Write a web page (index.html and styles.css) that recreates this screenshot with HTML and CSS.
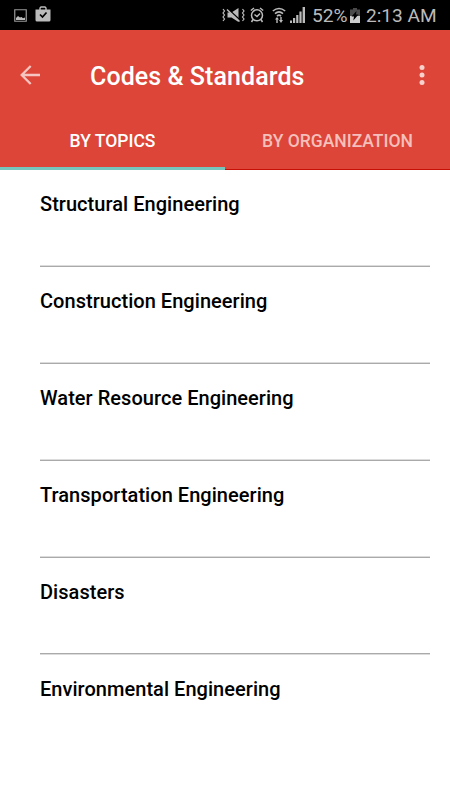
FILE: index.html
```html
<!DOCTYPE html>
<html lang="en">
<head>
<meta charset="utf-8">
<title>Codes &amp; Standards</title>
<link rel="stylesheet" href="styles.css">
</head>
<body>
<div class="status">
  <svg class="picture" width="13" height="13" viewBox="0 0 13 13"><path d="M.75.75h11.5v11.5H.75z" fill="none" stroke="#999" stroke-width="1.2"/><path d="M2 11V9l2-2 2 1.5L7.5 8l1.5 1.2 2-.7V11z" fill="#bbb"/></svg>
  <svg class="bag" width="16" height="16" viewBox="0 0 16 16"><path d="M5 4V2l1-1h4l1 1v2" fill="none" stroke="#bbb" stroke-width="1.4"/><path d="M.5 3.5h15V14q0 1.5-1.5 1.5H2Q.5 15.500.5 14z" fill="#bbb"/><path d="M5 8.500l2.500 2.500L11.500 6.500" fill="none" stroke="#000" stroke-width="1.7"/></svg>
  <svg class="mute" width="23" height="16" viewBox="0 0 23 16" fill="none" stroke="#bbb" stroke-width="1.2"><path d="M5.500 5.500h4L16.500 1v14l-7-4.500h-4z" fill="#bbb" stroke="none"/><path d="M5.500 1.500L18 13" stroke="#000" stroke-width="1.500"/><path d="M5 2.500L17.500 14.500" stroke-width="1.500"/><path d="M1 2l1.500 2L1 6l1.500 2L1 10l1.500 2L1 14M20.500 2L22 4l-1.500 2L22 8l-1.500 2 1.500 2-1.500 2"/></svg>
  <svg class="alarm" width="14" height="16" viewBox="0 0 14 16" fill="none" stroke="#bbb" stroke-width="1.5"><circle cx="7" cy="8.300" r="5.500"/><path d="M.8 3.500L4 1M13.200 3.500L10 1M3 12.500L1.500 15M11 12.500l1.500 2.500M4.500 7.500L7 9.500l3-3"/></svg>
  <svg class="wifi" width="14" height="16" viewBox="0 0 14 16" fill="none" stroke="#bbb" stroke-width="1.600"><path d="M.8 4Q7-1 13.200 4M3 6.700q4-3.500 8 0M5 9.200q2-2 4 0"/><path d="M3 12.500l2-2.500L7 12.500H5.700V16H4.300v-3.500zM7 13h1.300v-3h1.400v3H11l-2 3z" fill="#bbb" stroke="none"/></svg>
  <svg class="signal" width="15" height="16" viewBox="0 0 15 16" fill="#bbb"><path d="M0 13.500h2V16H0zM3 11h2.200v5H3zM6.200 8h2.200v8H6.200zM9.400 4.500h2.200V16H9.400zM12.600 0H15v16h-2.400z"/></svg>
  <span class="percent">52%</span>
  <svg class="battery" width="10" height="15" viewBox="0 0 10 15"><path d="M3 0h4v1.500h3V9H0V1.500h3z" fill="#4a4a4a"/><path d="M0 8h10v7H0z" fill="#ccc"/><path d="M6.500 3L1.500 8.500H4L3.300 12.500l5.200-6H6z" fill="#000"/></svg>
  <span class="clock">2:13 AM</span>
</div>
<header class="header">
  <div class="toolbar">
    <svg class="back" width="20" height="20" viewBox="0 0 20 20" fill="none" stroke="#f6c5c1" stroke-width="2.300"><path d="M20 10H2M10.700 1L1.700 10l9 9"/></svg>
    <h1 class="title">Codes &amp; Standards</h1>
    <svg class="more" width="6" height="20" viewBox="0 0 6 20" fill="#f8d0cc"><circle cx="3" cy="2.500" r="2.500"/><circle cx="3" cy="10" r="2.500"/><circle cx="3" cy="17.500" r="2.500"/></svg>
  </div>
  <nav class="tabs">
    <div class="tab active"><span class="label">BY TOPICS</span></div>
    <div class="tab"><span class="label">BY ORGANIZATION</span></div>
  </nav>
</header>
<ul class="list">
  <li class="row">Structural Engineering</li>
  <li class="row">Construction Engineering</li>
  <li class="row">Water Resource Engineering</li>
  <li class="row">Transportation Engineering</li>
  <li class="row">Disasters</li>
  <li class="row">Environmental Engineering</li>
</ul>
</body>
</html>
```
FILE: styles.css
```css
* { box-sizing: border-box; }
body {
  margin: 0;
  height: 800px;
  overflow: hidden;
  background: #fff;
  font-family: Roboto, sans-serif;
}
svg { display: block; flex: none; }
.status {
  display: flex;
  align-items: center;
  height: 30px;
  padding-left: 14px;
  background: #000;
  color: #bbb;
  font-size: 19.5px;
  line-height: 30px;
  white-space: nowrap;
}
.bag { margin: -2px 0 0 8px; }
.mute { margin-left: 171px; }
.alarm { margin-left: 5px; }
.wifi { margin-left: 8px; }
.signal { margin-left: 4px; }
.percent { width: 35px; margin: 1px 0 0 7px; font-size: 19.2px; }
.battery { margin-left: 3px; }
.clock { margin: 1px 0 0 6px; font-size: 19.1px; }
.header { height: 140px; background: #dc4538; }
.toolbar {
  display: flex;
  align-items: center;
  height: 90px;
  padding: 0 25px 0 20px;
}
.title {
  flex: 1;
  margin: 4px 0 0 50px;
  color: #fff;
  font-size: 25px;
  font-weight: 500;
  letter-spacing: .07px;
  line-height: 30px;
}
.tabs { display: flex; height: 50px; }
.tab {
  flex: 1;
  display: flex;
  justify-content: center;
  height: 50px;
  padding-top: 11px;
  border-bottom: 1px solid #c80f05;
  color: #f5c0bb;
  font-size: 17.5px;
  font-weight: 500;
  line-height: 20px;
}
.active { border-bottom: 3px solid #78c5bd; color: #fff; }
.list { margin: 0; padding: 0 20px 0 40px; list-style: none; }
.row {
  height: 97px;
  padding-top: 22px;
  border-bottom: 1px solid #aaa;
  box-shadow: inset 0 -1px #dcdcdc;
  color: #000;
  font-size: 20px;
  font-weight: 500;
  letter-spacing: .04px;
  line-height: 24px;
}
.row:nth-child(5) {
  height: 96px;
  box-shadow: 0 1px #dcdcdc;
}
.row:last-child {
  padding-top: 23px;
  border-bottom: 0;
  box-shadow: none;
}
```
